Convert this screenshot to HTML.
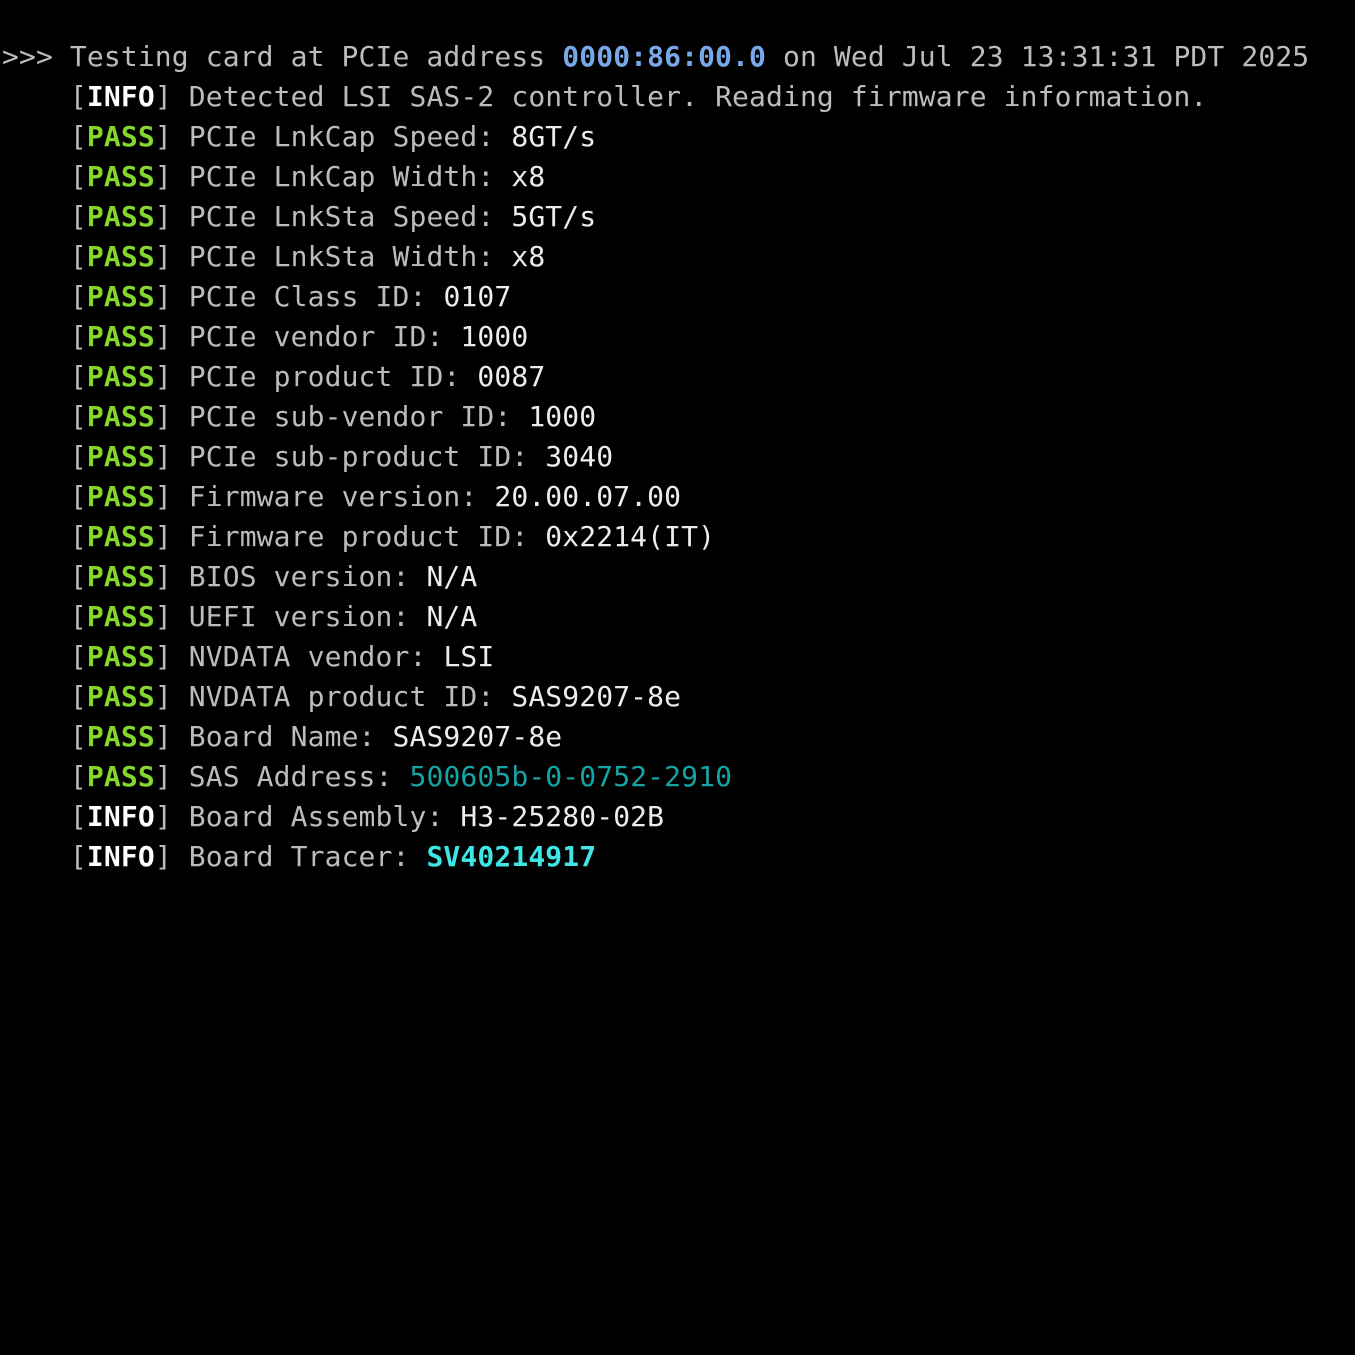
<!DOCTYPE html>
<html><head><meta charset="utf-8"><style>
html,body{margin:0;background:#000;width:1355px;height:1355px;overflow:hidden}
pre{margin:0;position:absolute;left:2px;top:37px;font-family:"DejaVu Sans Mono","Liberation Mono",monospace;font-size:28px;line-height:40px;letter-spacing:0.12px;color:#bcbcbc;white-space:pre}
.w{color:#ececec}.b{font-weight:bold}
.i{color:#fff;font-weight:bold}.p{color:#86d72c;font-weight:bold}
.a{color:#78a8e8;font-weight:bold}.t{color:#16a3a3}.c{color:#3fe6e6;font-weight:bold}
</style></head><body><pre>&gt;&gt;&gt; Testing card at PCIe address <span class="a">0000:86:00.0</span> on Wed Jul 23 13:31:31 PDT 2025
    [<span class="i">INFO</span>] Detected LSI SAS-2 controller. Reading firmware information.
    [<span class="p">PASS</span>] PCIe LnkCap Speed: <span class="w">8GT/s</span>
    [<span class="p">PASS</span>] PCIe LnkCap Width: <span class="w">x8</span>
    [<span class="p">PASS</span>] PCIe LnkSta Speed: <span class="w">5GT/s</span>
    [<span class="p">PASS</span>] PCIe LnkSta Width: <span class="w">x8</span>
    [<span class="p">PASS</span>] PCIe Class ID: <span class="w">0107</span>
    [<span class="p">PASS</span>] PCIe vendor ID: <span class="w">1000</span>
    [<span class="p">PASS</span>] PCIe product ID: <span class="w">0087</span>
    [<span class="p">PASS</span>] PCIe sub-vendor ID: <span class="w">1000</span>
    [<span class="p">PASS</span>] PCIe sub-product ID: <span class="w">3040</span>
    [<span class="p">PASS</span>] Firmware version: <span class="w">20.00.07.00</span>
    [<span class="p">PASS</span>] Firmware product ID: <span class="w">0x2214(IT)</span>
    [<span class="p">PASS</span>] BIOS version: <span class="w">N/A</span>
    [<span class="p">PASS</span>] UEFI version: <span class="w">N/A</span>
    [<span class="p">PASS</span>] NVDATA vendor: <span class="w">LSI</span>
    [<span class="p">PASS</span>] NVDATA product ID: <span class="w">SAS9207-8e</span>
    [<span class="p">PASS</span>] Board Name: <span class="w">SAS9207-8e</span>
    [<span class="p">PASS</span>] SAS Address: <span class="t">500605b-0-0752-2910</span>
    [<span class="i">INFO</span>] Board Assembly: <span class="w">H3-25280-02B</span>
    [<span class="i">INFO</span>] Board Tracer: <span class="c">SV40214917</span>
</pre></body></html>
